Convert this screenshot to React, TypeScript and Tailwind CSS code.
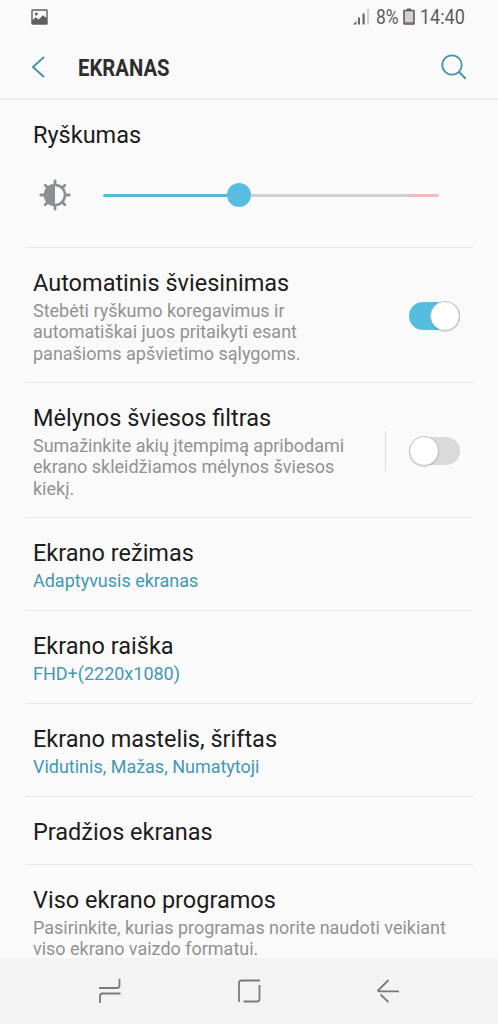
import type { ReactNode } from 'react';

type RowProps = {
  title: string;
  lines?: string[];
  accent?: boolean;
  className: string;
  children?: ReactNode;
};

function Row({ title, lines = [], accent = false, className, children }: RowProps) {
  return (
    <section className={`flex justify-between border-b border-[#e6e6e6] pl-2 pr-[13px] ${className}`}>
      <div className="pt-[21px]">
        <h2 className="text-[23.5px] leading-7 text-[#1c1c1c] whitespace-nowrap">{title}</h2>
        <p className={`mt-[3px] text-[18px] leading-[21.3px] tracking-[-0.01px] whitespace-nowrap ${accent ? 'text-[#4299b1]' : 'text-[#929292]'}`}>
          {lines.map((line) => (
            <span key={line} className="block">{line}</span>
          ))}
        </p>
      </div>
      {children}
    </section>
  );
}

function Toggle({ on }: { on?: boolean }) {
  return (
    <div className={`flex h-7 w-[51px] items-center rounded-full ${on ? 'justify-end bg-[#54bde0]' : 'bg-[#dadada]'}`}>
      <div className="size-[30px] shrink-0 rounded-full border border-[#c4c4c4] bg-white shadow-[0_1px_1px_rgba(0,0,0,0.15)]" />
    </div>
  );
}

function BrightnessIcon() {
  return (
    <svg width="32" height="32" viewBox="0 0 32 32" fill="none" stroke="#8b9092">
      <circle cx="16" cy="16" r="10" strokeWidth="2.6" />
      <path d="M16 6a10 10 0 0 0 0 20z" fill="#8b9092" stroke="none" />
      <path
        d="M16 1.8v3.4M16 26.8v3.4M1.8 16h3.4M26.8 16h3.4M6.2 6.2l2 2M23.8 23.8l2 2M6.2 25.8l2-2M23.8 8.2l2-2"
        strokeWidth="2.8"
        strokeLinecap="round"
      />
    </svg>
  );
}

export default function App() {
  return (
    <div className="flex h-[1024px] w-[498px] flex-col overflow-hidden bg-[#fafafa] font-['Roboto',sans-serif]">
      {/* status bar */}
      <div className="flex h-[35px] shrink-0 items-center pl-[31px] pr-[33px] text-[#5c5c5c]">
        <svg className="-mt-[2px]" width="17" height="16" viewBox="0 0 17 16">
          <rect x="1" y="1" width="15" height="14" rx="0.5" fill="none" stroke="#606060" strokeWidth="1.4" />
          <circle cx="5.3" cy="5" r="1.5" fill="#606060" />
          <path d="M1 15V11.5L4.8 8.3L7.5 10.5L12 6.3L16 9.5V15z" fill="#606060" />
        </svg>
        <svg className="-mt-[1px] ml-auto" width="17" height="16" viewBox="0 0 17 16" fill="#666">
          <path d="M0 15.5L3.5 12V15.5z" />
          <rect x="5" y="8.5" width="2" height="7" />
          <rect x="9.5" y="4.5" width="2.2" height="11" />
          <rect x="14" y="0" width="2" height="15.5" fill="#d0d0d0" />
        </svg>
        <div className="ml-[6px] w-[23px] whitespace-nowrap">
          <span className="inline-block origin-left scale-x-[0.87] text-[20px] leading-6">8%</span>
        </div>
        <svg className="-mt-[2px] ml-[4px]" width="12" height="17" viewBox="0 0 12 17">
          <path d="M4 0.5h4v2H4z" fill="#5c5c5c" />
          <rect x="1" y="2.5" width="10" height="13.5" rx="0.5" fill="#d2d0d0" stroke="#5c5c5c" strokeWidth="1.6" />
          <path d="M1.8 14.6h8.4" stroke="#a5655f" />
        </svg>
        <div className="ml-[5px] w-[45px] whitespace-nowrap">
          <span className="inline-block origin-left scale-x-[0.9] text-[20px] leading-6">14:40</span>
        </div>
      </div>

      {/* header */}
      <header className="flex h-[65px] shrink-0 items-center border-b-2 border-[#ececec] pl-[31px] pr-[31px]">
        <svg width="14" height="22" viewBox="0 0 14 22" fill="none" stroke="#4595ab" strokeWidth="2">
          <path d="M13 1L2 11L13 21" />
        </svg>
        <h1 className="mt-[2px] ml-[33px] origin-left scale-x-[0.845] text-2xl leading-7 font-bold text-[#2e2e2e]">EKRANAS</h1>
        <svg className="ml-auto" width="26" height="26" viewBox="0 0 26 26" fill="none" stroke="#4595ab" strokeWidth="1.8">
          <circle cx="11" cy="11" r="9.7" />
          <path d="M17.8 17.8L24.7 24.7" strokeWidth="2" />
        </svg>
      </header>

      <main className="flex min-h-0 grow flex-col overflow-hidden px-[25px]">
        <section className="h-[148px] shrink-0 border-b border-[#e6e6e6] pl-2 pt-[21px]">
          <h2 className="text-[23.5px] leading-7 text-[#1c1c1c]">Ryškumas</h2>
          <div className="mt-[30px] flex items-center pl-[6px]">
            <BrightnessIcon />
            <div className="ml-8 flex h-6 w-[336px] items-center">
              <div className="h-[3px] w-[124px] rounded-l-full bg-[#54b8d8]" />
              <div className="size-6 rounded-full bg-[#57bee1]" />
              <div className="h-[3px] w-[155px] bg-[#d0d0d0]" />
              <div className="h-[3px] w-[33px] rounded-r-full bg-[#f0bcbc]" />
            </div>
          </div>
        </section>

        <Row
          className="h-[135px] shrink-0"
          title="Automatinis šviesinimas"
          lines={['Stebėti ryškumo koregavimus ir', 'automatiškai juos pritaikyti esant', 'panašioms apšvietimo sąlygoms.']}
        >
          <div className="flex items-center pt-px"><Toggle on /></div>
        </Row>
        <Row
          className="h-[135px] shrink-0"
          title="Mėlynos šviesos filtras"
          lines={['Sumažinkite akių įtempimą apribodami', 'ekrano skleidžiamos mėlynos šviesos', 'kiekį.']}
        >
          <div className="flex items-center gap-[23px] pt-px">
            <div className="h-10 w-[1.5px] bg-[#dedede]" />
            <Toggle />
          </div>
        </Row>
        <Row className="h-[93px] shrink-0" title="Ekrano režimas" lines={['Adaptyvusis ekranas']} accent />
        <Row className="h-[93px] shrink-0" title="Ekrano raiška" lines={['FHD+(2220x1080)']} accent />
        <Row className="h-[93px] shrink-0" title="Ekrano mastelis, šriftas" lines={['Vidutinis, Mažas, Numatytoji']} accent />
        <Row className="h-[68px] shrink-0" title="Pradžios ekranas" />
        <Row
          className="h-[135px] shrink-0"
          title="Viso ekrano programos"
          lines={['Pasirinkite, kurias programas norite naudoti veikiant', 'viso ekrano vaizdo formatui.']}
        />
      </main>

      {/* navigation bar */}
      <nav className="flex h-[66px] shrink-0 items-center justify-between bg-[#f3f3f3] pl-[98px] pr-[98px]">
        <svg width="24" height="26" viewBox="0 0 24 26" fill="none" stroke="#7a7a7a" strokeWidth="1.8">
          <path d="M1 10H19Q21.5 10 21.5 7.5V0.7M22.5 15.5H4.5Q2 15.5 2 18V25" />
        </svg>
        <svg width="24" height="24" viewBox="0 0 24 24" fill="none" stroke="#7a7a7a" strokeWidth="1.8">
          <path d="M2 23V4Q2 1.5 4.5 1.5H23M22.5 6V20Q22.5 22.5 20 22.5H6.5" />
        </svg>
        <svg width="24" height="24" viewBox="0 0 24 24" fill="none" stroke="#7a7a7a" strokeWidth="1.8">
          <path d="M12.5 1L2 11.5Q1.8 12.3 3 12.3H23M4.5 15.5L12.5 23.2" />
        </svg>
      </nav>
    </div>
  );
}
